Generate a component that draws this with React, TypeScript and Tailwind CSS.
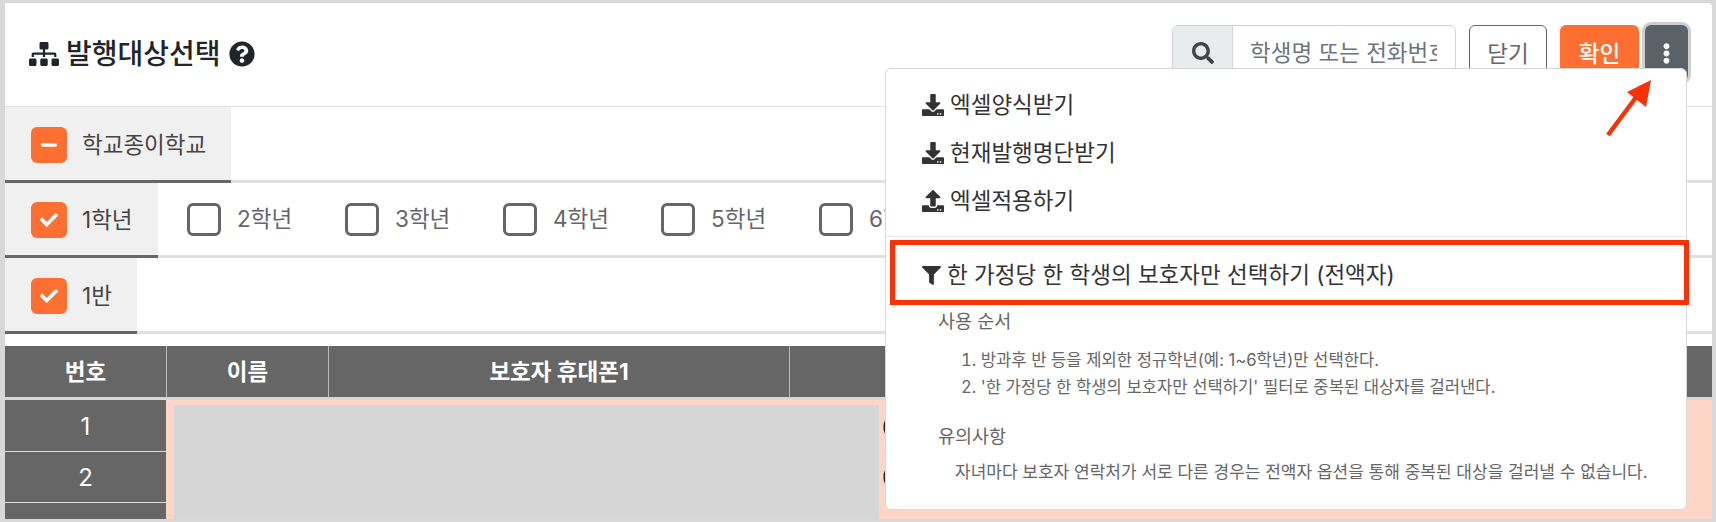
import { FaCheck, FaDownload, FaEllipsisV, FaFilter, FaMinus, FaQuestionCircle, FaSearch, FaSitemap, FaUpload } from "react-icons/fa";

const grades = ["1학년", "2학년", "3학년", "4학년", "5학년", "6학년"];

function Box({ state }: { state: "on" | "off" | "some" }) {
  if (state === "off") {
    return <span className="w-[34px] h-[33px] shrink-0 rounded-[6px] border-[3px] border-[#666] bg-white" />;
  }
  return (
    <span className="w-[36px] h-[36px] shrink-0 rounded-[6px] bg-[#ff6f31] flex items-center justify-center text-white">
      {state === "on" ? <FaCheck size={18} /> : <FaMinus size={18} />}
    </span>
  );
}

function TabRow({ height, children }: { height: string; children: React.ReactNode }) {
  return <div className={`${height} flex border-b-[3px] border-[#e0e0e0]`}>{children}</div>;
}

function ActiveTab({ label, state, width, height }: { label: string; state: "on" | "some"; width: string; height: string }) {
  return (
    <div className={`${width} ${height} flex items-center gap-[15px] pl-[26px] pt-[2px] bg-[#f0f0f0] border-b-[3px] border-[#666] text-[22.5px] text-[#444]`}>
      <Box state={state} />
      <span>{label}</span>
    </div>
  );
}

function MenuItem({ icon, label }: { icon: React.ReactNode; label: string }) {
  return (
    <div className="h-[48px] flex items-center gap-[6px] pl-[36px] text-[22.5px] text-[#333]">
      {icon}
      <span>{label}</span>
    </div>
  );
}

export default function App() {
  return (
    <div className="relative h-[522px] overflow-hidden bg-[#d8d8d8] pt-[3px] pb-[3px] pl-[5px] pr-[4px] font-['Inter','Noto_Sans_CJK_KR','Noto_Sans',sans-serif]">
      <div className="h-[516px] bg-white rounded-tr-[4px] overflow-hidden">
        {/* Header */}
        <div className="h-[104px] flex justify-between pt-[22px] pr-[24px] border-b border-[#e2e2e2]">
          <div className="flex items-center h-[52px] mt-[3px] pl-[24px] text-[#212529]">
            <FaSitemap size={30} />
            <span className="ml-[7px] text-[28px] font-medium leading-none">발행대상선택</span>
            <FaQuestionCircle size={26} className="ml-[8px]" />
          </div>
          <div className="flex items-start">
            <div className="flex w-[284px] h-[56px] border border-[#ced4da] rounded-[6px] overflow-hidden">
              <span className="w-[60px] bg-[#e9ecef] flex items-center justify-center text-[#444] border-r border-[#ced4da]">
                <FaSearch size={22} />
              </span>
              <input
                placeholder="학생명 또는 전화번호 검색"
                className="flex-1 min-w-0 pl-[17px] pr-[18px] text-[22.5px] outline-none placeholder:text-[#6c757d]"
              />
            </div>
            <button className="ml-[13px] w-[78px] h-[58px] border border-[#666] rounded-[6px] text-[22.5px] text-[#666] bg-white">닫기</button>
            <button className="ml-[13px] w-[79px] h-[58px] rounded-[6px] text-[22.5px] font-medium text-white bg-[#ff6f31]">확인</button>
            <button className="ml-[6px] w-[43px] h-[56px] rounded-[6px] bg-[#5a6268] ring-[3px] ring-[#cfcfcf] text-white flex items-center justify-center">
              <FaEllipsisV size={21} />
            </button>
          </div>
        </div>

        {/* Select rows */}
        <TabRow height="h-[76px]">
          <ActiveTab label="학교종이학교" state="some" width="w-[226px]" height="h-[76px]" />
        </TabRow>
        <TabRow height="h-[75px]">
          <ActiveTab label={grades[0]} state="on" width="w-[153px]" height="h-[75px]" />
          {grades.slice(1).map((g) => (
            <div key={g} className="w-[158px] h-[72px] flex items-center gap-[16px] pl-[29px] text-[22.5px] text-[#666]">
              <Box state="off" />
              <span>{g}</span>
            </div>
          ))}
        </TabRow>
        <TabRow height="h-[76px]">
          <ActiveTab label="1반" state="on" width="w-[132px]" height="h-[76px]" />
        </TabRow>

        {/* Table */}
        <div className="mt-[12px] h-[51px] bg-[#666] flex text-[22.5px] font-bold text-white border-b-[3px] border-[#d8d8d8] box-content">
          <div className="w-[161px] flex items-center justify-center">번호</div>
          <div className="w-[162px] flex items-center justify-center border-l border-[#bbb]">이름</div>
          <div className="w-[461px] flex items-center justify-center border-l border-[#bbb]">보호자 휴대폰1</div>
          <div className="flex-1 border-l border-[#bbb]" />
        </div>
        <div className="flex">
          <div className="w-[161px] shrink-0 bg-[#666] text-white text-[24px]">
            <div className="h-[52px] pt-[2px] flex items-center justify-center border-b border-[#ddd]">1</div>
            <div className="h-[51px] pt-[2px] flex items-center justify-center border-b border-[#ddd]">2</div>
            <div className="h-[16px]" />
          </div>
          <div className="flex-1 bg-[#fdd6c8] flex pt-[5px] pl-[8px]">
            <div className="w-[705px] h-[115px] bg-[#d6d6d6]" />
            <div className="pl-[3px] text-[24px] text-[#222]">
              <div className="h-[51px] pt-[5px]">0</div>
              <div className="h-[51px] pt-[4px]">0</div>
            </div>
          </div>
        </div>
      </div>

      {/* Dropdown menu */}
      <div className="absolute left-[885px] top-[68px] w-[802px] h-[442px] bg-white border border-[#d8d8d8] rounded-[6px] pt-[12px]">
        <MenuItem icon={<FaDownload size={22} />} label="엑셀양식받기" />
        <MenuItem icon={<FaDownload size={22} />} label="현재발행명단받기" />
        <MenuItem icon={<FaUpload size={22} />} label="엑셀적용하기" />
        <div className="mt-[11px] border-t border-[#e5e5e5]" />
        <div className="h-[72px] flex items-center gap-[6px] pl-[36px] pt-[4px] text-[22.5px] text-[#333]">
          <FaFilter size={19} />
          <span>한 가정당 한 학생의 보호자만 선택하기 (전액자)</span>
        </div>
        <div className="pl-[52px] text-[#666]">
          <div className="text-[18.5px] leading-[28px] -mt-[2px]">사용 순서</div>
          <ol className="mt-[12px] pl-[23px] text-[16.6px] leading-[27px] list-decimal list-inside">
            <li>방과후 반 등을 제외한 정규학년(예: 1~6학년)만 선택한다.</li>
            <li>'한 가정당 한 학생의 보호자만 선택하기' 필터로 중복된 대상자를 걸러낸다.</li>
          </ol>
          <div className="text-[18.5px] leading-[28px] mt-[21px]">유의사항</div>
          <div className="mt-[8px] pl-[17px] text-[17px] leading-[28px]">자녀마다 보호자 연락처가 서로 다른 경우는 전액자 옵션을 통해 중복된 대상을 걸러낼 수 없습니다.</div>
        </div>
      </div>

      {/* Annotations */}
      <div className="absolute left-[890px] top-[240px] w-[799px] h-[65px] border-[5px] border-[#f63206]" />
      <svg className="absolute left-[1600px] top-[75px]" width="60" height="66" viewBox="0 0 60 66">
        <path d="M8 60 L37 21" stroke="#f63206" strokeWidth="4.5" />
        <path d="M51 5 L27 17 L46 32 Z" fill="#f63206" />
      </svg>
    </div>
  );
}
